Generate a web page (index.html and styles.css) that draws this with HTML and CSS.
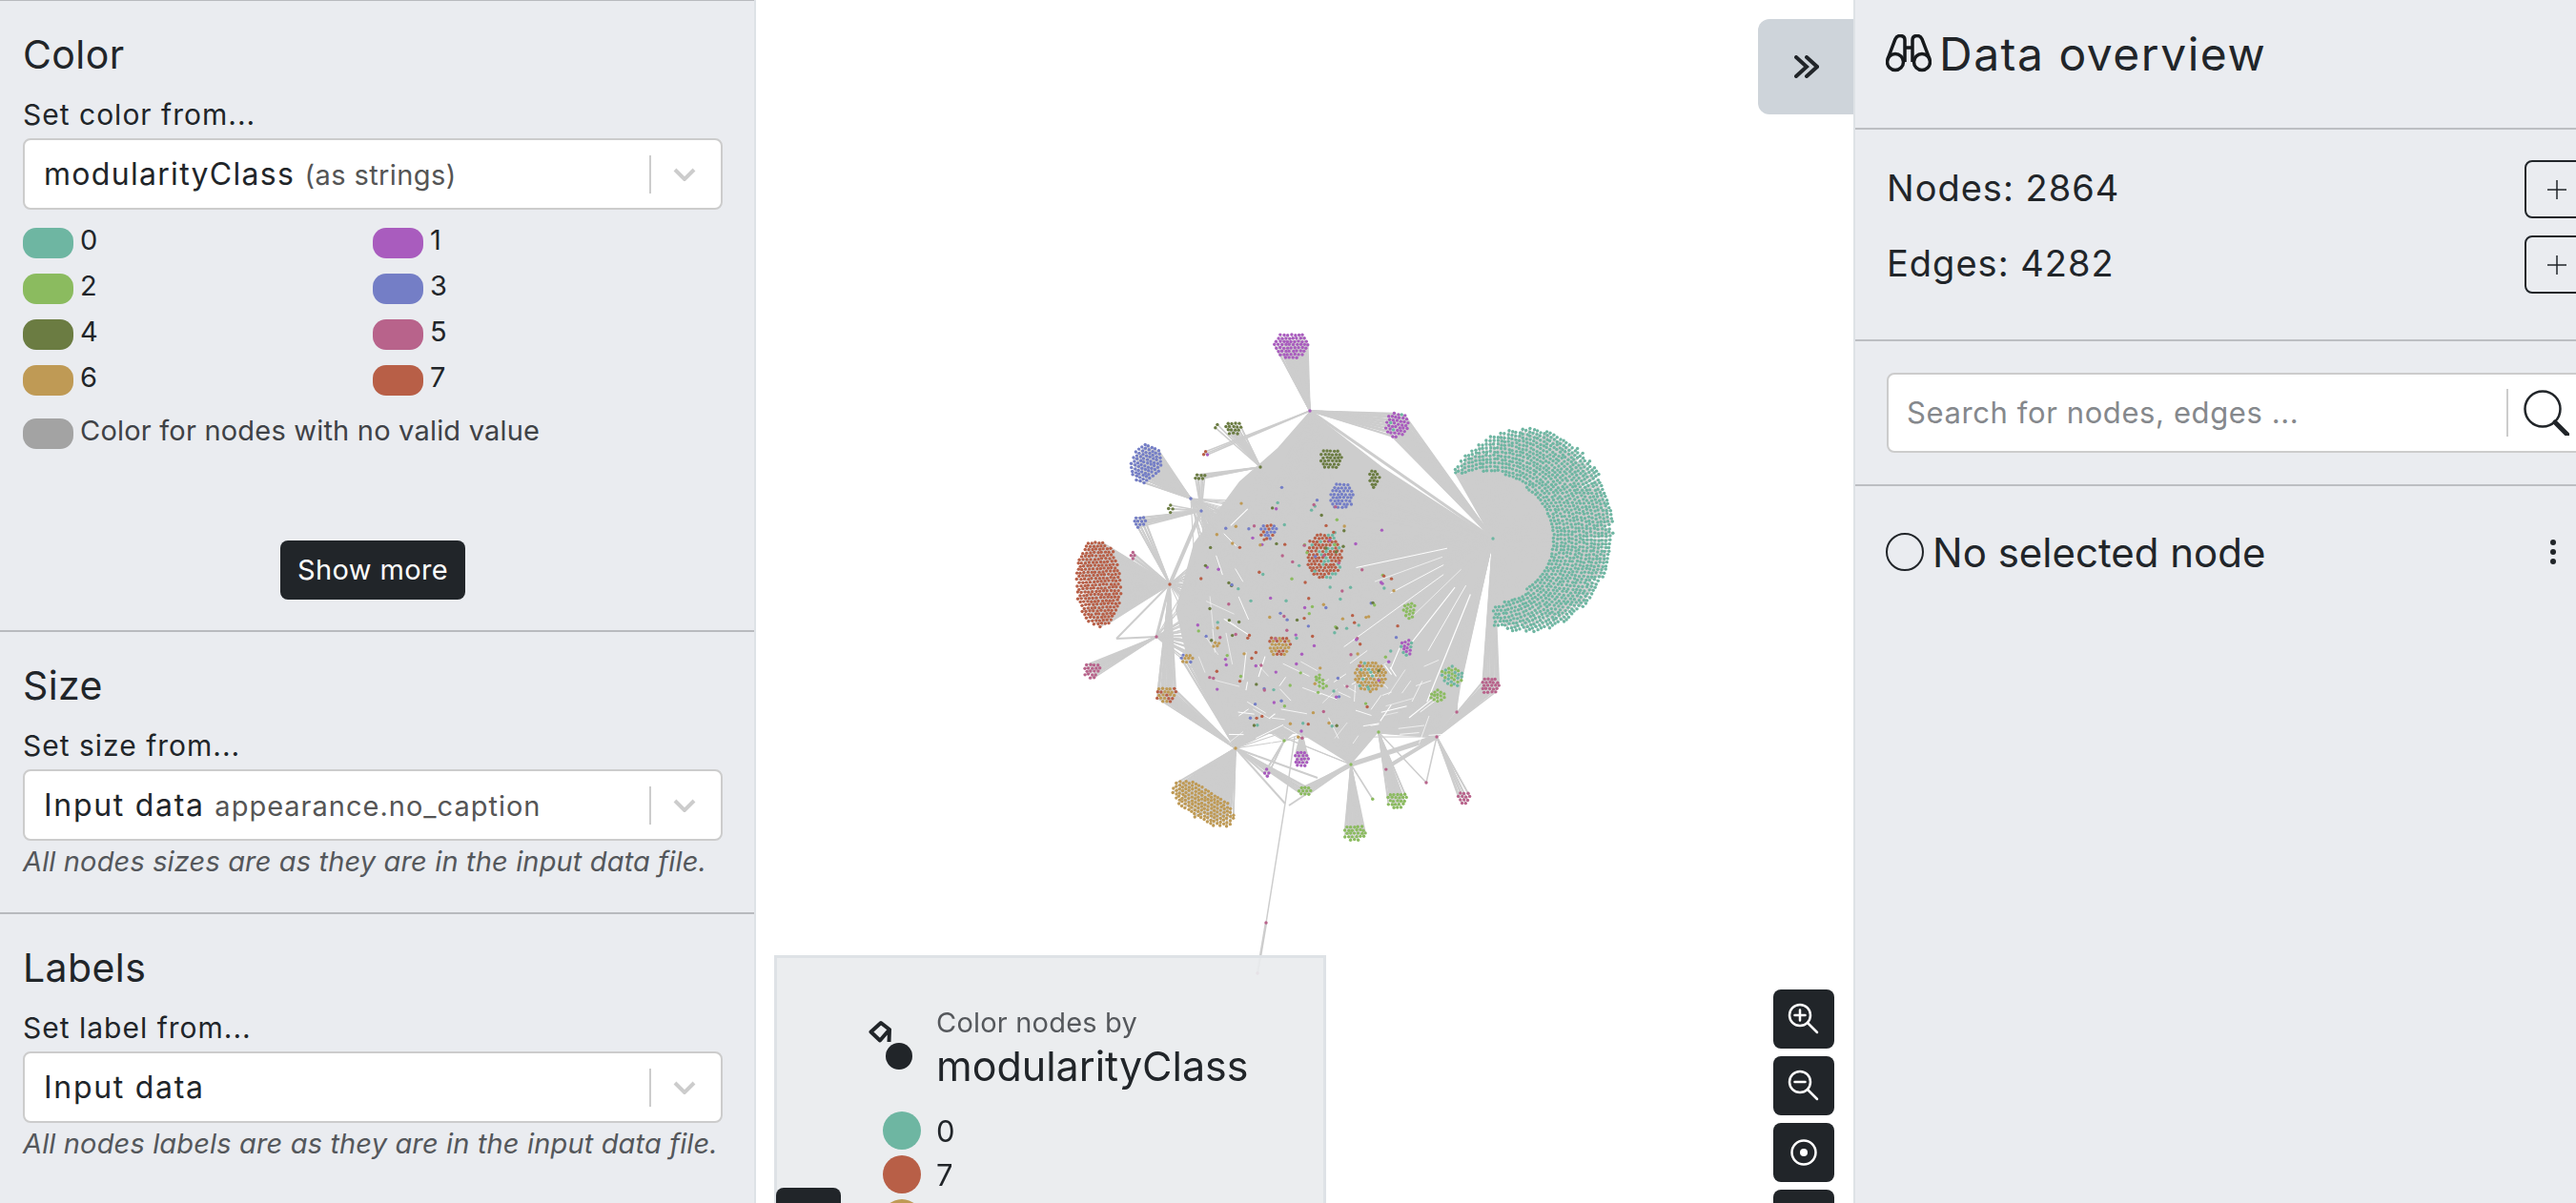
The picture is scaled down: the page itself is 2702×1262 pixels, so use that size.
FILE: index.html
```html
<!DOCTYPE html>
<html lang="en">
  <head>
    <meta charset="UTF-8" />
    <title>Graph appearance</title>
    <link rel="stylesheet" href="styles.css">
  </head>
  <body>
    <aside class="left-panel">
      <section class="block block-first">
        <h2>Color</h2>
        <label class="field-label">Set color from...</label>
        <div class="select">
          <span class="select-value">modularityClass <small class="sp-str">(as strings)</small></span>
          <span class="select-sep"></span>
          <svg class="select-arrow" viewBox="0 0 24 14"><polyline points="2,2 12,12 22,2" /></svg>
        </div>
        <div class="swatches">
          <div class="swatch"><span class="pill c0"></span>0</div>
          <div class="swatch"><span class="pill c1"></span>1</div>
          <div class="swatch"><span class="pill c2"></span>2</div>
          <div class="swatch"><span class="pill c3"></span>3</div>
          <div class="swatch"><span class="pill c4"></span>4</div>
          <div class="swatch"><span class="pill c5"></span>5</div>
          <div class="swatch"><span class="pill c6"></span>6</div>
          <div class="swatch"><span class="pill c7"></span>7</div>
        </div>
        <div class="swatch swatch-none"><span class="pill cnone"></span>Color for nodes with no valid value</div>
        <div class="more-row"><button class="btn-dark">Show more</button></div>
      </section>

      <section class="block">
        <h2>Size</h2>
        <label class="field-label">Set size from...</label>
        <div class="select">
          <span class="select-value sp-input">Input data <small class="sp-cap">appearance.no_caption</small></span>
          <span class="select-sep"></span>
          <svg class="select-arrow" viewBox="0 0 24 14"><polyline points="2,2 12,12 22,2" /></svg>
        </div>
        <p class="hint">All nodes sizes are as they are in the input data file.</p>
      </section>

      <section class="block">
        <h2>Labels</h2>
        <label class="field-label">Set label from...</label>
        <div class="select">
          <span class="select-value sp-input">Input data</span>
          <span class="select-sep"></span>
          <svg class="select-arrow" viewBox="0 0 24 14"><polyline points="2,2 12,12 22,2" /></svg>
        </div>
        <p class="hint">All nodes labels are as they are in the input data file.</p>
      </section>
    </aside>

    <main class="graph">
      <canvas id="sigma" width="1151" height="1262"></canvas>

      <button class="toggle">
        <svg viewBox="0 0 26 24"><path d="M2 2 L13 12 L2 22 M13 2 L24 12 L13 22" /></svg>
      </button>

      <div class="caption">
        <div class="caption-head">
          <svg class="caption-icon" viewBox="0 0 48 54">
            <path class="bucket" d="M12 21.500 L2.500 12.500 L13 3 L22 10 Z M22 10 L21.500 23" />
            <circle cx="32" cy="38" r="14" />
          </svg>
          <div>
            <div class="caption-sub">Color nodes by</div>
            <div class="caption-title">modularityClass</div>
          </div>
        </div>
        <ul class="caption-list">
          <li><span class="dot c0"></span>0</li>
          <li><span class="dot c7"></span>7</li>
          <li><span class="dot c6"></span>6</li>
        </ul>
      </div>

      <button class="corner-btn"></button>

      <div class="zoom-stack">
        <button class="zoom-btn">
          <svg viewBox="0 0 34 34"><circle cx="13" cy="13" r="11" /><path d="M21 21 L31 31 M7.500 13 H18.500 M13 7.500 V18.500" /></svg>
        </button>
        <button class="zoom-btn">
          <svg viewBox="0 0 34 34"><circle cx="13" cy="13" r="11" /><path d="M21 21 L31 31 M7.500 13 H18.500" /></svg>
        </button>
        <button class="zoom-btn">
          <svg viewBox="0 0 34 34"><circle cx="17" cy="17" r="12.500" /><circle class="solid" cx="17" cy="17" r="4" /></svg>
        </button>
        <button class="zoom-btn"></button>
      </div>
    </main>

    <aside class="right-panel">
      <section class="r-block r-head">
        <svg class="binoculars" viewBox="0 0 48 40">
          <circle cx="10" cy="29" r="8.500" />
          <circle cx="38" cy="29" r="8.500" />
          <path d="M2 26 L10 5 Q11.500 1.500 15 1.500 Q20 1.500 20 6 V29 M46 26 L38 5 Q36.500 1.500 33 1.500 Q28 1.500 28 6 V29 M20 14 H28" />
        </svg>
        <h1>Data overview</h1>
      </section>

      <section class="r-block r-stats">
        <div class="stat"><span>Nodes: 2864</span><button class="plus"><svg viewBox="0 0 20 20"><path d="M10 0 V20 M0 10 H20" /></svg></button></div>
        <div class="stat"><span>Edges: 4282</span><button class="plus"><svg viewBox="0 0 20 20"><path d="M10 0 V20 M0 10 H20" /></svg></button></div>
      </section>

      <section class="r-block r-search">
        <div class="search">
          <input type="text" placeholder="Search for nodes, edges ..." />
          <span class="select-sep"></span>
          <svg class="search-icon" viewBox="0 0 48 48"><circle cx="20" cy="20" r="18.500" /><path class="handle" d="M33 34 L46 47" /></svg>
        </div>
      </section>

      <section class="r-block r-node">
        <span class="ring"></span>
        <span class="node-title">No selected node</span>
        <span class="kebab"><i></i><i></i><i></i></span>
      </section>
    </aside>

    <script src="graph.js"></script>
  </body>
</html>
```

FILE: styles.css
```css
* {
  box-sizing: border-box;
}

html,
body {
  height: 100%;
}

body {
  margin: 0;
  display: flex;
  overflow: hidden;
  background: #fff;
  color: #212529;
  font-family: Inter, "Open Sans", sans-serif;
  font-size: 27px;
}

button {
  font-family: inherit;
  border: none;
  padding: 0;
}

/* swatch colours */
.c0 { background: #6eb6a2; }
.c1 { background: #a95cbe; }
.c2 { background: #8bbb5f; }
.c3 { background: #747ec6; }
.c4 { background: #6b7c42; }
.c5 { background: #b8638b; }
.c6 { background: #bf9a55; }
.c7 { background: #b85f47; }
.cnone { background: #a3a3a3; }

/* left panel */
.left-panel {
  flex: 0 0 793px;
  height: 100%;
  overflow: hidden;
  background: #eaecf0;
  border-right: 2px solid #dee2e6;
}

.block {
  padding: 33px 33px 33px 24px;
  border-top: 2px solid #b8babe;
}

.block-first {
  border-top-width: 1px;
  padding-bottom: 32px;
}

.block h2 {
  margin: 0 0 20px;
  font-size: 41px;
  font-weight: 400;
  line-height: 46px;
  letter-spacing: 0.4px;
}

.field-label {
  display: block;
  height: 40px;
  margin-bottom: 5px;
  line-height: 41px;
  font-size: 30px;
  letter-spacing: 1px;
}

.select {
  display: flex;
  align-items: center;
  height: 75px;
  padding: 0 26px 0 20px;
  background: #fff;
  border: 2px solid #ccc;
  border-radius: 8px;
}

.select-value {
  flex: 1;
  font-size: 32px;
  letter-spacing: 1.300px;
  white-space: nowrap;
}

.sp-input {
  letter-spacing: 1.700px;
}

.select-value small {
  font-size: 29px;
  color: #555;
}

.sp-str {
  letter-spacing: 0.400px;
}

.sp-cap {
  letter-spacing: 1px;
}

.select-sep {
  flex: none;
  width: 2px;
  height: 40px;
  background: #ccc;
}

.select-arrow {
  width: 24px;
  height: 14px;
  margin-left: 23px;
  fill: none;
  stroke: #ccc;
  stroke-width: 4;
}

.swatches {
  display: grid;
  grid-template-columns: 367px 1fr;
  row-gap: 16px;
  margin-top: 19px;
}

.swatch {
  display: flex;
  align-items: flex-start;
  height: 32px;
  line-height: 26px;
  font-size: 29px;
}

.swatch-none {
  margin-top: 24px;
  color: #3f4246;
  letter-spacing: 0.200px;
}

.pill {
  flex: none;
  width: 53px;
  height: 32px;
  margin-right: 7px;
  border-radius: 14px;
}

.more-row {
  display: flex;
  justify-content: center;
  margin-top: 96px;
}

.btn-dark {
  width: 194px;
  height: 62px;
  padding-bottom: 2px;
  background: #212529;
  border-radius: 8px;
  color: #fff;
  font-size: 29px;
  letter-spacing: 0.400px;
}

.hint {
  height: 40px;
  margin: 2px 0 0;
  line-height: 40px;
  font-size: 29px;
  font-style: italic;
  letter-spacing: 0.150px;
  color: #54575b;
  white-space: nowrap;
}

/* graph area */
.graph {
  position: relative;
  flex: 0 0 1151px;
  height: 100%;
  overflow: hidden;
}

#sigma {
  position: absolute;
  top: 0;
  left: 0;
}

.toggle {
  position: absolute;
  top: 20px;
  right: 0;
  width: 100px;
  height: 100px;
  background: #ced4da;
  border-radius: 12px 0 0 12px;
}

.toggle svg {
  display: block;
  width: 26px;
  height: 24px;
  margin: 0 0 0 38px;
  fill: none;
  stroke: #212529;
  stroke-width: 4;
  stroke-linecap: round;
}

.caption {
  position: absolute;
  top: 1002px;
  left: 19px;
  width: 579px;
  height: 320px;
  padding: 48px 0 0 96px;
  background: rgba(233, 235, 238, 0.92);
  border: 3px solid #dee2e6;
}

.caption-head {
  display: flex;
  align-items: flex-start;
}

.caption-icon {
  flex: none;
  width: 48px;
  height: 54px;
  margin: 17px 23px 0 0;
}

.caption-icon circle {
  fill: #212529;
}

.bucket {
  fill: none;
  stroke: #212529;
  stroke-width: 4;
  stroke-linejoin: round;
}

.caption-sub {
  height: 40px;
  line-height: 40px;
  font-size: 29px;
  letter-spacing: 0.200px;
  color: #55585c;
}

.caption-title {
  height: 54px;
  line-height: 50px;
  font-size: 43px;
}

.caption-list {
  margin: 19px 0 0 15px;
  padding: 0;
  list-style: none;
}

.caption-list li {
  display: flex;
  align-items: center;
  height: 40px;
  margin-bottom: 6px;
  font-size: 31px;
}

.dot {
  width: 40px;
  height: 40px;
  margin-right: 16px;
  border-radius: 50%;
}

.corner-btn {
  position: absolute;
  top: 1246px;
  left: 21px;
  width: 68px;
  height: 62px;
  background: #212529;
  border-radius: 8px;
}

.zoom-stack {
  position: absolute;
  top: 1038px;
  right: 20px;
  display: flex;
  flex-direction: column;
  gap: 8px;
}

.zoom-btn {
  display: flex;
  align-items: center;
  justify-content: center;
  width: 64px;
  height: 62px;
  background: #212529;
  border-radius: 8px;
}

.zoom-btn svg {
  width: 34px;
  height: 34px;
  fill: none;
  stroke: #fff;
  stroke-width: 2.500;
  stroke-linecap: round;
}

.zoom-btn .solid {
  fill: #fff;
  stroke: none;
}

/* right panel */
.right-panel {
  flex: 0 0 790px;
  height: 100%;
  background: #eaecf0;
  border-left: 2px solid #dee2e6;
}

.r-block {
  padding-left: 33px;
  padding-right: 12px;
  border-bottom: 2px solid #bcbec2;
}

.r-head {
  display: flex;
  align-items: center;
  height: 136px;
  padding-bottom: 22px;
}

.binoculars {
  flex: none;
  width: 48px;
  height: 40px;
  margin: 0 8px 0 -1px;
  fill: none;
  stroke: #16191c;
  stroke-width: 3.500;
}

.r-head h1 {
  margin: 0;
  font-size: 48px;
  font-weight: 400;
  letter-spacing: 1.500px;
}

.r-stats {
  padding-top: 32px;
  padding-bottom: 48px;
}

.stat {
  display: flex;
  align-items: center;
  justify-content: space-between;
  font-size: 38px;
  letter-spacing: 1px;
}

.stat span {
  padding-bottom: 3px;
}

.stat + .stat {
  margin-top: 18px;
}

.plus {
  width: 74px;
  height: 61px;
  padding-left: 22px;
  background: transparent;
  border: 2px solid #212529;
  border-radius: 8px;
  text-align: left;
}

.plus svg {
  display: block;
  width: 20px;
  height: 20px;
  fill: none;
  stroke: #212529;
  stroke-width: 1.500;
}

.r-search {
  padding-top: 33px;
  padding-bottom: 33px;
}

.search {
  display: flex;
  align-items: center;
  height: 84px;
  padding-left: 19px;
  background: #fff;
  border: 2px solid #ccc;
  border-radius: 8px;
}

.search input {
  flex: none;
  width: 629px;
  margin-top: -2px;
  border: none;
  outline: none;
  padding: 0;
  font-family: inherit;
  font-size: 31px;
  letter-spacing: 0.600px;
}

.search input::placeholder {
  color: #85888c;
}

.search .select-sep {
  height: 50px;
}

.search-icon {
  flex: none;
  width: 48px;
  height: 48px;
  margin-left: 16px;
  fill: none;
  stroke: #212529;
  stroke-width: 2.500;
}

.search-icon .handle {
  stroke-width: 5;
  stroke-linecap: round;
}

.r-node {
  display: flex;
  align-items: center;
  height: 138px;
  border-bottom: none;
}

.ring {
  flex: none;
  width: 40px;
  height: 40px;
  margin: 0 9px 0 -1px;
  border: 2px solid #212529;
  border-radius: 50%;
}

.node-title {
  flex: 1;
  font-size: 42px;
}

.kebab {
  display: flex;
  flex-direction: column;
  gap: 4px;
  margin-right: 41px;
}

.kebab i {
  width: 6px;
  height: 6px;
  background: #212529;
  border-radius: 50%;
}
```

FILE: graph.js
```js
// draws the network on the canvas, coordinates are page pixels
const canvas = document.getElementById("sigma");
const ctx = canvas.getContext("2d");
ctx.translate(-793, 0);

let seed = 20240611;
function rnd() {
  seed = (seed + 0x6d2b79f5) | 0;
  let t = Math.imul(seed ^ (seed >>> 15), 1 | seed);
  t = (t + Math.imul(t ^ (t >>> 7), 61 | t)) ^ t;
  return ((t ^ (t >>> 14)) >>> 0) / 4294967296;
}

const COLORS = ["#6eb6a2", "#a95cbe", "#8bbb5f", "#747ec6", "#6b7c42", "#b8638b", "#bf9a55", "#b85f47"];
const EDGE = "#cdcdcd";

const H = {
  teal: [1566, 565, 0],
  purple: [1374, 431, 1],
  red: [1227, 613, 7],
  pink: [1213, 668, 5],
  gold: [1296, 785, 6],
  green: [1417, 802, 2],
  pink2: [1507, 773, 5],
  blue: [1260, 536, 3],
  blueIn: [1249, 523, 3],
  olive: [1322, 490, 4],
  green2: [1446, 768, 2],
  purple2: [1365, 767, 1],
  mid: [1347, 777, 2],
};

const nodes = [];
const edges = [];

function addNode(x, y, c) {
  nodes.push([x, y, c]);
}

function addEdge(a, b, w) {
  edges.push([a[0], a[1], b[0], b[1], w || 1.2]);
}

// cluster: x, y, rx, ry, rotation (deg), colour, hubs, second colour share
// nodes sit on a loose hex grid inside the ellipse
function cluster(x, y, rx, ry, rot, c, hubs, mix) {
  const cos = Math.cos((rot * Math.PI) / 180);
  const sin = Math.sin((rot * Math.PI) / 180);
  const gap = 3.9;
  let row = 0;
  for (let v = -ry; v <= ry; v += gap * 0.87) {
    row++;
    for (let u = -rx + (row % 2) * gap * 0.5; u <= rx; u += gap) {
      if ((u * u) / (rx * rx) + (v * v) / (ry * ry) > 1) continue;
      const px = u + (rnd() - 0.5) * 0.9;
      const py = v + (rnd() - 0.5) * 0.9;
      const nx = x + px * cos - py * sin;
      const ny = y + px * sin + py * cos;
      const col = mix && rnd() < mix[1] ? mix[0] : c;
      addNode(nx, ny, col);
      hubs.forEach((h) => addEdge(h, [nx, ny], 1.6));
    }
  }
}

// the big crescent around the teal hub
function crescent() {
  const hub = H.teal;
  const cx = 1600, cy = 556, rx = 92, ry = 107;
  const step = 3.9;
  let row = 0;
  for (let r = 60; r < 135; r += step) {
    row++;
    const arc = Math.max(1, Math.floor((3.63 * r) / step));
    for (let i = 0; i <= arc; i++) {
      const th = ((-120 + (208 * (i + (row % 2) * 0.5)) / arc) * Math.PI) / 180;
      const inner = 60 + 16 * Math.pow(Math.abs(th) / 2.05, 2);
      const dx = Math.cos(th), dy = Math.sin(th);
      if (r < inner) continue;
      const x = hub[0] + r * dx + (rnd() - 0.5) * 1.2;
      const y = hub[1] + r * dy + (rnd() - 0.5) * 1.2;
      const ex = (x - cx) / rx, ey = (y - cy) / ry;
      if (ex * ex + ey * ey > 1) continue;
      addNode(x, y, 0);
      addEdge(hub, [x, y], 2.2);
    }
  }
}

crescent();

cluster(1354, 362, 19, 14, 0, 1, [H.purple]);
cluster(1465, 445, 12, 14, 10, 1, [H.purple, H.teal], [0, 0.15]);
cluster(1202, 486, 16, 21, 22, 3, [H.blueIn]);
cluster(1152, 612, 24, 46, -3, 7, [H.red]);
cluster(1262, 843, 37, 17, 32, 6, [H.gold]);
cluster(1421, 873, 12, 9, 0, 2, [H.green]);
cluster(1293, 449, 9, 8, 0, 4, [H.olive]);
cluster(1276, 447, 3, 5, 0, 4, [H.olive]);
cluster(1265, 475, 4, 5, 0, 1, [H.purple], [7, 0.3]);
cluster(1258, 499, 6, 4, 0, 4, [H.olive, H.blue]);
cluster(1228, 534, 4, 7, 0, 4, [H.blue]);
cluster(1195, 547, 7, 7, 0, 3, [H.blue, H.red]);
cluster(1396, 481, 12, 11, 0, 4, [H.purple]);
cluster(1441, 502, 6, 11, 0, 4, [H.teal]);
cluster(1407, 520, 13, 15, 0, 3, [H.teal]);
cluster(1187, 582, 3, 6, 0, 5, [H.red]);
cluster(1145, 703, 9, 9, 0, 5, [H.pink]);
cluster(1171, 670, 2, 1.500, 0, 5, [H.pink]);
cluster(1389, 583, 19, 25, 0, 7, [H.teal], [0, 0.22]);
cluster(1330, 557, 9, 9, 0, 3, [H.purple], [7, 0.3]);
cluster(1478, 640, 7, 9, -20, 2, [H.teal]);
cluster(1475, 679, 7, 9, -20, 1, [H.teal], [0, 0.2]);
cluster(1437, 709, 17, 17, 0, 6, [H.teal], [0, 0.12]);
cluster(1342, 677, 12, 11, 0, 6, [H.gold], [7, 0.3]);
cluster(1523, 709, 11, 12, -25, 2, [H.teal], [0, 0.5]);
cluster(1507, 730, 8, 8, -30, 2, [H.pink2]);
cluster(1563, 719, 10, 10, 0, 5, [H.teal, H.pink2]);
cluster(1536, 836, 8, 7, 0, 5, [H.pink2]);
cluster(1465, 839, 11, 9, 0, 2, [H.green2]);
cluster(1438, 838, 2, 3, 0, 2, [H.green]);
cluster(1453, 806, 3, 2, 0, 5, [H.green2, H.pink2]);
cluster(1365, 796, 8, 10, 0, 1, [H.purple2]);
cluster(1368, 829, 7, 6, 0, 2, [H.gold, H.green]);
cluster(1329, 810, 4, 6, 0, 1, [H.mid, H.gold], [6, 0.4]);
cluster(1223, 728, 11, 9, 0, 6, [H.gold, H.red], [7, 0.4]);
cluster(1244, 690, 7, 6, 0, 3, [H.gold], [6, 0.5]);
cluster(1275, 675, 4, 4, 0, 6, [H.gold, H.pink]);
cluster(1385, 715, 5, 10, -30, 2, [H.gold]);

// lone nodes scattered in the middle, tied to a few hubs
const hubList = Object.values(H);
for (let i = 0; i < 190; i++) {
  const a = rnd() * Math.PI * 2;
  const r = Math.sqrt(rnd());
  const x = 1362 + r * 112 * Math.cos(a);
  const y = 640 + r * 138 * Math.sin(a);
  const c = [4, 2, 7, 5, 1, 3, 6, 0][Math.floor(rnd() * 8)];
  addNode(x, y, c);
  for (let k = 0; k < 3; k++) {
    addEdge(hubList[Math.floor(rnd() * hubList.length)], [x, y], 1.1);
  }
}

// hub to hub and the long tail going under the legend
addEdge(H.pink, H.red, 3);
addEdge(H.pink, [1171, 670], 2);
addEdge([1171, 670], H.red, 2);
addEdge(H.blue, H.red, 4);
addEdge(H.purple, H.teal, 3);
addEdge(H.gold, [1348, 843], 2);
addEdge(H.gold, [1382, 816], 2);
addEdge(H.green, [1352, 845], 2);
addEdge(H.green, [1368, 829], 5);
addEdge([1358, 773], [1348, 843], 1.500);
addEdge([1348, 843], [1328, 968], 1.500);
addEdge([1328, 968], [1319, 1021], 2.500);
addEdge(H.pink2, [1496, 821], 1.500);
addEdge(H.pink2, [1528, 747], 2);
addEdge(H.green2, [1496, 821], 1.500);
addEdge(H.green2, H.pink2, 3);
addEdge(H.pink2, [1453, 806], 4);
addEdge(H.green, H.pink2, 5);
addEdge([1528, 747], [1530, 700], 1.500);
addNode(1496, 821, 5);
addNode(1528, 747, 5);
addNode(1328, 968, 5);
addNode(1319, 1021, 5);
Object.values(H).forEach((h) => addNode(h[0], h[1], h[2]));

// solid core, the edges overlap so densely there that no white is left
ctx.fillStyle = EDGE;
ctx.beginPath();
[
  [1374, 431], [1450, 490], [1566, 565], [1545, 640], [1528, 745], [1507, 773],
  [1446, 768], [1417, 802], [1365, 770], [1330, 770], [1296, 785], [1270, 740],
  [1245, 690], [1233, 640], [1252, 570], [1300, 505], [1340, 470],
].forEach((p, i) => (i ? ctx.lineTo(p[0], p[1]) : ctx.moveTo(p[0], p[1])));
ctx.closePath();
ctx.fill();

ctx.strokeStyle = EDGE;
edges.forEach((e) => {
  ctx.lineWidth = e[4];
  ctx.beginPath();
  ctx.moveTo(e[0], e[1]);
  ctx.lineTo(e[2], e[3]);
  ctx.stroke();
});

// slits of white between the fans of edges
ctx.strokeStyle = "#fff";
function slit(a, x, y, len, w) {
  const dx = x - a[0], dy = y - a[1];
  const d = Math.hypot(dx, dy);
  ctx.lineWidth = w;
  ctx.beginPath();
  ctx.moveTo(x, y);
  ctx.lineTo(x + (dx / d) * len, y + (dy / d) * len);
  ctx.stroke();
}

// the long ones out of the teal hub, towards the bottom
for (let i = 0; i < 8; i++) {
  const th = ((112 + i * 8) * Math.PI) / 180;
  const r = 45 + rnd() * 20;
  slit(H.teal, H.teal[0] + r * Math.cos(th), H.teal[1] + r * Math.sin(th), 60 + rnd() * 70, 0.6 + rnd() * 0.7);
}
// short ones in the lower half
const fans = [H.teal, H.gold, H.pink2, H.green];
for (let i = 0; i < 60; i++) {
  const x = 1300 + rnd() * 200;
  const y = 695 + rnd() * 80;
  slit(fans[Math.floor(rnd() * fans.length)], x, y, 8 + rnd() * 24, 0.5 + rnd() * 0.6);
}
// web on the left side, around the blue and red hubs
for (let i = 0; i < 14; i++) {
  const x = 1240 + rnd() * 60;
  const y = 520 + rnd() * 170;
  slit(i % 2 ? H.blue : H.red, x, y, 10 + rnd() * 25, 0.5 + rnd() * 0.6);
}

nodes.forEach((n) => {
  ctx.fillStyle = COLORS[n[2]];
  ctx.beginPath();
  ctx.arc(n[0], n[1], 1.7, 0, Math.PI * 2);
  ctx.fill();
});
```
